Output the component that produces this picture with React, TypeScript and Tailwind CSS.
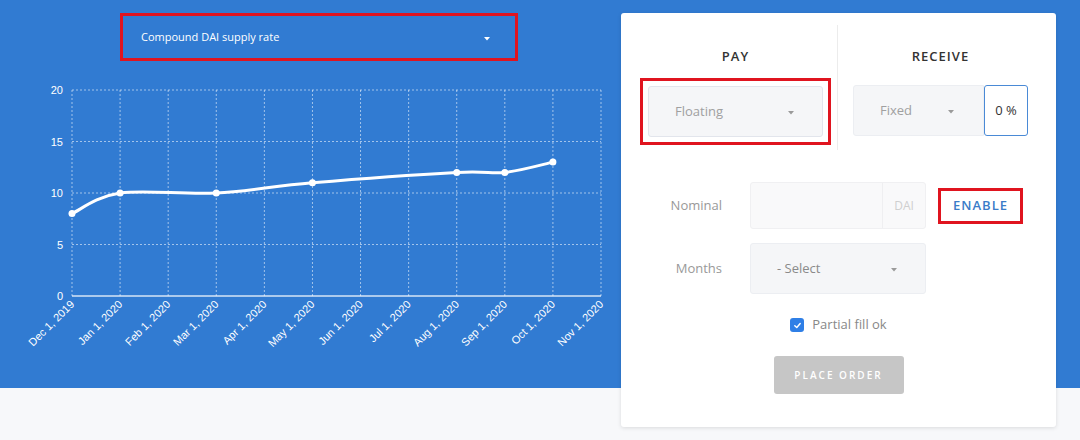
import React from 'react';

const months = [
  'Dec 1, 2019', 'Jan 1, 2020', 'Feb 1, 2020', 'Mar 1, 2020', 'Apr 1, 2020', 'May 1, 2020',
  'Jun 1, 2020', 'Jul 1, 2020', 'Aug 1, 2020', 'Sep 1, 2020', 'Oct 1, 2020', 'Nov 1, 2020',
];

// rate samples: [month index, value]
const samples: [number, number][] = [
  [0, 8], [1, 10], [3, 10], [5, 11], [8, 12], [9, 12], [10, 13],
];

const X0 = 72;
const X1 = 601;
const Y0 = 296;
const Y1 = 90;
const xAt = (i: number) => X0 + ((X1 - X0) / 11) * i;
const yAt = (v: number) => Y0 - ((Y0 - Y1) / 20) * v;

function smoothPath(pts: [number, number][]) {
  let d = `M${pts[0][0]},${pts[0][1]}`;
  for (let i = 0; i < pts.length - 1; i++) {
    const p0 = pts[i - 1] || pts[i];
    const p1 = pts[i];
    const p2 = pts[i + 1];
    const p3 = pts[i + 2] || p2;
    const c1x = p1[0] + (p2[0] - p0[0]) / 6;
    const c1y = p1[1] + (p2[1] - p0[1]) / 6;
    const c2x = p2[0] - (p3[0] - p1[0]) / 6;
    const c2y = p2[1] - (p3[1] - p1[1]) / 6;
    d += ` C${c1x},${c1y} ${c2x},${c2y} ${p2[0]},${p2[1]}`;
  }
  return d;
}

function Caret({ color = '#9a9a9a' }: { color?: string }) {
  return (
    <svg width="6" height="4" viewBox="0 0 6 4" className="shrink-0 mt-[3px]">
      <polygon points="0,0 6,0 3,3.5" fill={color} />
    </svg>
  );
}

function RateChart() {
  const pts = samples.map(([i, v]) => [xAt(i), yAt(v)] as [number, number]);
  return (
    <svg width="620" height="318" viewBox="0 70 620 318" className="block">
      {/* grid */}
      {[20, 15, 10, 5].map((v) => (
        <line key={v} x1={X0} x2={X1} y1={yAt(v)} y2={yAt(v)} stroke="rgba(255,255,255,0.55)" strokeWidth="1" strokeDasharray="2 2" />
      ))}
      {months.map((m, i) => (
        <line key={m} x1={xAt(i)} x2={xAt(i)} y1={Y1} y2={Y0} stroke="rgba(255,255,255,0.55)" strokeWidth="1" strokeDasharray="2 2" />
      ))}
      <line x1={X0} x2={X1} y1={Y0} y2={Y0} stroke="rgba(255,255,255,0.6)" strokeWidth="2" />

      {/* y labels */}
      {[20, 15, 10, 5, 0].map((v) => (
        <text key={v} x="63" y={yAt(v) + 4} textAnchor="end" fill="#fff" fontSize="11" fontFamily="'Liberation Sans', Arial, sans-serif">
          {v}
        </text>
      ))}

      {/* x labels */}
      {months.map((m, i) => (
        <text
          key={m}
          transform={`translate(${xAt(i) + 3}, 305) rotate(-45)`}
          textAnchor="end"
          fill="#fff"
          fontSize="11"
          fontFamily="'Liberation Sans', Arial, sans-serif"
        >
          {m}
        </text>
      ))}

      {/* rate line */}
      <path d={smoothPath(pts)} fill="none" stroke="#fff" strokeWidth="3" strokeLinecap="round" />
      {pts.map(([x, y]) => (
        <circle key={x} cx={x} cy={y} r="3.5" fill="#fff" />
      ))}
    </svg>
  );
}

export default function App() {
  return (
    <div className="w-[1080px] h-[440px] overflow-hidden bg-[#f7f8fa]" style={{ fontFamily: "'Open Sans', 'Noto Sans', sans-serif" }}>
      <div className="h-[388px] bg-[#317bd2] flex">
        {/* Chart column */}
        <div className="w-[621px] shrink-0 flex flex-col pt-[13px]">
          <div className="ml-[120px] w-[398px] h-[48px] border-[3px] border-[#e0141f] flex items-center justify-between pl-[18px] pr-[25px]">
            <span className="text-[11px] text-white">Compound DAI supply rate</span>
            <Caret color="#ffffff" />
          </div>
          <div className="mt-[9px]">
            <RateChart />
          </div>
        </div>

        {/* Order card */}
        <div className="mt-[13px] w-[435px] h-[414px] shrink-0 bg-white rounded-[3px] shadow-[0_1px_4px_rgba(0,0,0,0.12)] flex flex-col">
          <div className="mt-[12px] h-[125px] flex">
            <div className="w-[217px] border-r border-[#ececec] flex flex-col">
              <div className="ml-[19px] w-[191px] pt-[23px] text-center text-[13px] font-semibold tracking-[1px] text-[#333] leading-[16px]">PAY</div>
              <div className="mt-[14px] ml-[19px] w-[191px] h-[67px] border-[3px] border-[#e0141f] flex items-center justify-center">
                <div className="w-[175px] h-[51px] bg-[#f5f6f8] border border-[#e2e5ec] rounded-[3px] flex items-center justify-between pl-[26px] pr-[28px]">
                  <span className="text-[13px] text-[#a0a0a0]">Floating</span>
                  <Caret />
                </div>
              </div>
            </div>
            <div className="w-[218px] flex flex-col">
              <div className="ml-[15px] w-[175px] pt-[23px] text-center text-[13px] font-semibold tracking-[1px] text-[#333] leading-[16px]">RECEIVE</div>
              <div className="mt-[21px] ml-[15px] flex h-[51px]">
                <div className="w-[131px] bg-[#f5f6f8] border border-[#eceef2] rounded-l-[3px] flex items-center justify-between pl-[26px] pr-[29px]">
                  <span className="text-[13px] text-[#a0a0a0]">Fixed</span>
                  <Caret />
                </div>
                <div className="w-[44px] border border-[#4a8ad6] rounded-[3px] flex items-center justify-center text-[13px] text-[#333]">
                  0 %
                </div>
              </div>
            </div>
          </div>

          {/* Nominal */}
          <div className="mt-[32px] h-[47px] flex items-center">
            <div className="w-[101px] text-right text-[13px] text-[#999]">Nominal</div>
            <div className="ml-[28px] w-[176px] h-[47px] bg-[#f9f9fa] border border-[#f0f0f2] rounded-[3px] flex">
              <div className="flex-1" />
              <div className="w-[43px] border-l border-[#efeff1] flex items-center justify-center text-[12px] text-[#cfcfcf]">DAI</div>
            </div>
            <div className="ml-[12px] w-[85px] h-[36px] border-[3px] border-[#e0141f] flex items-center justify-center text-[13px] font-semibold tracking-[1px] text-[#3a7cc8]">
              ENABLE
            </div>
          </div>

          {/* Months */}
          <div className="mt-[14px] h-[51px] flex items-center">
            <div className="w-[101px] text-right text-[13px] text-[#999]">Months</div>
            <div className="ml-[28px] w-[176px] h-[51px] bg-[#f5f6f8] border border-[#eceef2] rounded-[3px] flex items-center justify-between pl-[26px] pr-[28px]">
              <span className="text-[13px] text-[#8a8a8a]">- Select</span>
              <Caret />
            </div>
          </div>

          {/* Partial fill */}
          <div className="mt-[24px] h-[14px] flex items-center justify-center gap-[8px]">
            <div className="w-[14px] h-[14px] rounded-[3px] bg-[#2f7fe6] flex items-center justify-center">
              <svg width="9" height="9" viewBox="0 0 10 10">
                <path d="M2 5.2 L4.2 7.3 L8 2.8" fill="none" stroke="#fff" strokeWidth="1.6" strokeLinecap="round" strokeLinejoin="round" />
              </svg>
            </div>
            <span className="text-[13px] text-[#888]">Partial fill ok</span>
          </div>

          {/* Place order */}
          <div className="mt-[24px] flex justify-center">
            <div className="w-[130px] h-[38px] bg-[#c6c6c6] rounded-[3px] flex items-center justify-center text-[10px] font-semibold tracking-[2px] text-white">
              PLACE ORDER
            </div>
          </div>
        </div>
      </div>
    </div>
  );
}
